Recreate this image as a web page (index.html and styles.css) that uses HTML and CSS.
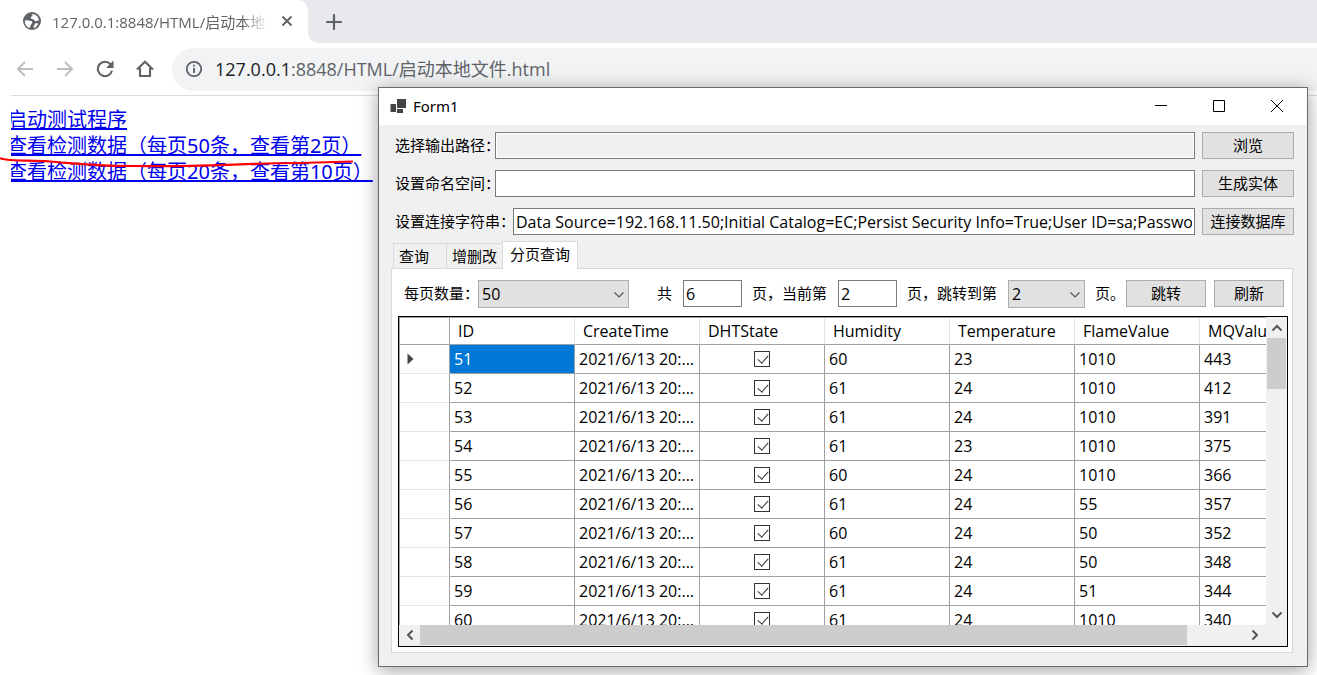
FILE: index.html
```html
<!DOCTYPE html>
<html lang="zh-CN">
<head>
<meta charset="utf-8">
<title>127.0.0.1:8848/HTML/启动本地文件.html</title>
<link rel="stylesheet" href="styles.css">
</head>
<body>
<div class="browser">
  <header class="tabstrip">
    <div class="tab">
      <svg class="globe" width="18" height="18" viewBox="0 0 18 18" aria-hidden="true"><circle cx="9" cy="9" r="9" fill="#5f6368"/><path d="M2 8.500C4 8 6 9 8 9C9.500 9 9.500 10.500 9 11.500L7.500 13C7.500 14.500 7 15.500 6.500 16C3.500 15 1.500 12 2 8.500Z" fill="#fff"/><path d="M8.500 2C11 1.800 13 3 14.500 4.500L16 8C15 9 13 9.500 12 9C11 8.500 11.500 7.500 10 7.300C8.500 7 7.500 6.500 7.800 5.300C8 4.500 9 4.500 9.500 4C10 3.300 9 2.800 8.500 2Z" fill="#fff"/><path d="M12 11.500L14.500 11L15 12.500L12.500 15.500L10.500 15.800C10 14.500 12 13 12 11.500Z" fill="#fff"/></svg>
      <span class="tab-title">127.0.0.1:8848/HTML/启动本地文件</span>
      <button class="icon-btn tab-close" aria-label="关闭标签页"><svg width="12" height="12" viewBox="0 0 12 12"><path d="M1.500 1.500L10.500 10.500M10.500 1.500L1.500 10.500" stroke="#5f6368" stroke-width="1.900"/></svg></button>
    </div>
    <div class="strip-rest">
      <button class="icon-btn" aria-label="新标签页"><svg width="16" height="16" viewBox="0 0 16 16"><path d="M8 1V15M1 8H15" stroke="#5f6368" stroke-width="2.200" stroke-linecap="round"/></svg></button>
    </div>
  </header>
  <nav class="toolbar">
    <button class="icon-btn" aria-label="后退"><svg width="18" height="18" viewBox="0 0 18 18"><path d="M17 9H2M9 2L2 9L9 16" fill="none" stroke="#bcbec0" stroke-width="2"/></svg></button>
    <button class="icon-btn" aria-label="前进"><svg width="18" height="18" viewBox="0 0 18 18"><path d="M1 9H16M9 2L16 9L9 16" fill="none" stroke="#bcbec0" stroke-width="2"/></svg></button>
    <button class="icon-btn" aria-label="重新加载"><svg width="18" height="18" viewBox="0 0 18 18"><path d="M14.500 4.200A7.200 7.200 0 1 0 16 10.800" fill="none" stroke="#5f6368" stroke-width="2.100"/><path d="M17.500 0.500V8H10Z" fill="#5f6368"/></svg></button>
    <button class="icon-btn" aria-label="主页"><svg width="18" height="18" viewBox="0 0 18 18"><path d="M1 9.500L9 1.800L17 9.500M4 8V16H14V8" fill="none" stroke="#5f6368" stroke-width="2.100"/></svg></button>
    <div class="omnibox">
      <svg width="18" height="18" viewBox="0 0 18 18" aria-hidden="true"><circle cx="9" cy="9" r="7.200" fill="none" stroke="#5f6368" stroke-width="1.800"/><path d="M9 8V13M9 4.800V6.600" stroke="#5f6368" stroke-width="1.900"/></svg>
      <span class="url"><span class="host">127.0.0.1</span>:8848/HTML/启动本地文件.html</span>
    </div>
  </nav>
  <main class="page">
    <ul class="links">
      <li><a href="#start">启动测试程序</a></li>
      <li><a href="#page2">查看检测数据（每页50条，查看第2页）</a></li>
      <li><a href="#page10">查看检测数据（每页20条，查看第10页）</a></li>
    </ul>
  </main>
  <svg class="marker" width="360" height="16" viewBox="0 0 360 16" aria-hidden="true"><path d="M1 3.500C10 6.500 30 5 50 6.500C75 8.500 90 11 130 11C200 12 240 8.500 300 8L352 6.500" fill="none" stroke="#ff0000" stroke-width="2.200" stroke-linecap="round"/></svg>
</div>

<section class="window" aria-label="Form1">
  <header class="titlebar">
    <svg width="17" height="16" viewBox="0 0 17 16" aria-hidden="true"><path d="M7 1H16V10H7ZM0.500 6H6V14H0.500ZM7 11H13V15H7Z" fill="#444"/></svg>
    <span class="title">Form1</span>
    <button class="win-btn" aria-label="最小化"><svg width="12" height="12" viewBox="0 0 12 12"><path d="M0 5.500H12" stroke="#000"/></svg></button>
    <button class="win-btn" aria-label="最大化"><svg width="12" height="12" viewBox="0 0 12 12"><path d="M0.500 0.500H11.500V11.500H0.500Z" fill="none" stroke="#000"/></svg></button>
    <button class="win-btn" aria-label="关闭"><svg width="12" height="12" viewBox="0 0 12 12"><path d="M0 0L12 12M12 0L0 12" stroke="#000"/></svg></button>
  </header>
  <div class="form">
    <div class="row"><label class="short" for="out">选择输出路径：</label><input class="box readonly" id="out" readonly><button class="btn">浏览</button></div>
    <div class="row"><label class="short" for="ns">设置命名空间：</label><input class="box" id="ns"><button class="btn">生成实体</button></div>
    <div class="row"><label class="long" for="conn">设置连接字符串：</label><input class="box" id="conn" value="Data Source=192.168.11.50;Initial Catalog=EC;Persist Security Info=True;User ID=sa;Password"><button class="btn">连接数据库</button></div>
  </div>
  <div class="tabs" role="tablist">
    <button class="form-tab" role="tab">查询</button>
    <button class="form-tab" role="tab">增删改</button>
    <button class="form-tab active" role="tab" aria-selected="true">分页查询</button>
  </div>
  <div class="panel">
    <div class="pager">
      <label class="size-label" for="size">每页数量：</label>
      <span class="combo size"><select id="size"><option>50</option></select><svg width="12" height="8" viewBox="0 0 12 8"><path d="M1.500 1.500L6 6L10.500 1.500" fill="none" stroke="#555" stroke-width="1.200"/></svg></span>
      <label class="total" for="total">共</label><input class="num" id="total" value="6">
      <label for="current">页，当前第</label><input class="num" id="current" value="2">
      <label for="jump">页，跳转到第</label>
      <span class="combo jump"><select id="jump"><option>2</option></select><svg width="12" height="8" viewBox="0 0 12 8"><path d="M1.500 1.500L6 6L10.500 1.500" fill="none" stroke="#555" stroke-width="1.200"/></svg></span>
      <span class="end">页。</span>
      <button class="btn go">跳转</button>
      <button class="btn refresh">刷新</button>
    </div>
    <div class="grid">
      <div class="viewport">
        <table>
          <colgroup><col class="c-head"><col><col><col><col><col><col></colgroup>
          <thead><tr><th></th><th>ID</th><th>CreateTime</th><th>DHTState</th><th>Humidity</th><th>Temperature</th><th>FlameValue</th><th>MQValue</th></tr></thead>
          <tbody>
            <tr><th><svg width="7" height="12" viewBox="0 0 7 12" aria-label="当前行"><path d="M0.500 0.500L6.500 6L0.500 11.500Z" fill="#444"/></svg></th><td class="selected">51</td><td>2021/6/13 20:...</td><td class="check"><input type="checkbox" checked aria-label="51"></td><td>60</td><td>23</td><td>1010</td><td>443</td></tr>
            <tr><th></th><td>52</td><td>2021/6/13 20:...</td><td class="check"><input type="checkbox" checked aria-label="52"></td><td>61</td><td>24</td><td>1010</td><td>412</td></tr>
            <tr><th></th><td>53</td><td>2021/6/13 20:...</td><td class="check"><input type="checkbox" checked aria-label="53"></td><td>61</td><td>24</td><td>1010</td><td>391</td></tr>
            <tr><th></th><td>54</td><td>2021/6/13 20:...</td><td class="check"><input type="checkbox" checked aria-label="54"></td><td>61</td><td>23</td><td>1010</td><td>375</td></tr>
            <tr><th></th><td>55</td><td>2021/6/13 20:...</td><td class="check"><input type="checkbox" checked aria-label="55"></td><td>60</td><td>24</td><td>1010</td><td>366</td></tr>
            <tr><th></th><td>56</td><td>2021/6/13 20:...</td><td class="check"><input type="checkbox" checked aria-label="56"></td><td>61</td><td>24</td><td>55</td><td>357</td></tr>
            <tr><th></th><td>57</td><td>2021/6/13 20:...</td><td class="check"><input type="checkbox" checked aria-label="57"></td><td>60</td><td>24</td><td>50</td><td>352</td></tr>
            <tr><th></th><td>58</td><td>2021/6/13 20:...</td><td class="check"><input type="checkbox" checked aria-label="58"></td><td>61</td><td>24</td><td>50</td><td>348</td></tr>
            <tr><th></th><td>59</td><td>2021/6/13 20:...</td><td class="check"><input type="checkbox" checked aria-label="59"></td><td>61</td><td>24</td><td>51</td><td>344</td></tr>
            <tr><th></th><td>60</td><td>2021/6/13 20:...</td><td class="check"><input type="checkbox" checked aria-label="60"></td><td>61</td><td>24</td><td>1010</td><td>340</td></tr>
          </tbody>
        </table>
      </div>
      <div class="vbar">
        <button class="arrow" aria-label="向上滚动"><svg width="12" height="8" viewBox="0 0 12 8"><path d="M1.500 6.500L6 2L10.500 6.500" fill="none" stroke="#555" stroke-width="2"/></svg></button>
        <div class="vthumb"></div>
        <button class="arrow down" aria-label="向下滚动"><svg width="12" height="8" viewBox="0 0 12 8"><path d="M1.500 1.500L6 6L10.500 1.500" fill="none" stroke="#555" stroke-width="2"/></svg></button>
      </div>
      <div class="hbar">
        <button class="arrow" aria-label="向左滚动"><svg width="8" height="12" viewBox="0 0 8 12"><path d="M6.500 1.500L2 6L6.500 10.500" fill="none" stroke="#555" stroke-width="2"/></svg></button>
        <div class="track"><div class="hthumb"></div></div>
        <button class="arrow" aria-label="向右滚动"><svg width="8" height="12" viewBox="0 0 8 12"><path d="M1.500 1.500L6 6L1.500 10.500" fill="none" stroke="#555" stroke-width="2"/></svg></button>
      </div>
    </div>
  </div>
</section>
</body>
</html>
```
FILE: styles.css
```css
* { box-sizing: border-box; }

body {
  margin: 0;
  background: #fff;
  color: #000;
  font: 15px/20px "Noto Sans", "Noto Sans CJK SC", sans-serif;
}

button, input, select { font: inherit; color: inherit; margin: 0; padding: 0; border-radius: 0; }
svg { display: block; flex: none; }

.browser { position: relative; height: 100vh; overflow: hidden; }

.icon-btn, .win-btn, .arrow {
  display: flex;
  align-items: center;
  justify-content: center;
  border: 0;
  background: none;
}

/* Tab strip */
.tabstrip { display: flex; height: 43px; background: linear-gradient(90deg, #fff 50%, #e8e9ed 50%); }
.tab {
  display: flex;
  align-items: center;
  width: 308px;
  padding: 0 14px 1px 23px;
  background: #fff;
  border-radius: 0 10px 0 0;
  box-shadow: 10px -10px 0 #e8e9ed;
}
.tab-title {
  flex: 1;
  margin: 2px 12px 0 11px;
  overflow: hidden;
  white-space: nowrap;
  color: #5f6368;
  font: 15px/22px "Open Sans", "Noto Sans CJK SC", sans-serif;
  mask-image: linear-gradient(90deg, #000 88%, transparent);
}
.tab-close { width: 14px; height: 14px; }
.strip-rest {
  display: flex;
  flex: 1;
  align-items: center;
  padding-left: 18px;
  background: #e8e9ed;
  border-radius: 0 0 0 10px;
}

/* Toolbar */
.toolbar {
  display: flex;
  align-items: center;
  gap: 22px;
  height: 53px;
  margin-left: 11px;
  padding-left: 5px;
  border-bottom: 1px solid #dadce0;
}
.omnibox {
  display: flex;
  flex: 1;
  align-items: center;
  gap: 12px;
  height: 43px;
  margin-left: -4px;
  padding-left: 13px;
  border-radius: 22px 0 0 22px;
  background: #f1f3f4;
}
.url { color: #5f6368; font: 18px/26px "Open Sans", "Noto Sans CJK SC", sans-serif; }
.host { color: #202124; }

/* Page content */
.page { margin-left: 11px; padding-top: 11px; overflow: hidden; }
.links { margin: 0 0 0 -4px; padding: 0; list-style: none; font-size: 20px; line-height: 26px; }
.links a { color: #0000ee; text-decoration-thickness: 2px; }
.marker { position: absolute; left: 0; top: 155px; }

/* Form window */
.window {
  position: absolute;
  left: 378px;
  right: 9px;
  top: 87px;
  bottom: 8px;
  display: flex;
  flex-direction: column;
  border: 1px solid #6b6b6b;
  background: #f0f0f0;
  box-shadow: 0 3px 18px rgba(0, 0, 0, 0.38);
}
.titlebar { display: flex; align-items: center; height: 37px; padding: 0 6px 2px 11px; background: #fff; }
.title { flex: 1; margin-left: 6px; }
.win-btn { width: 48px; height: 34px; margin-left: 10px; }

.form { display: grid; gap: 11px; padding: 7px 13px 0 16px; }
.row { display: flex; align-items: center; height: 27px; white-space: nowrap; }
.row label { padding-bottom: 2px; }
.short { width: 100px; }
.long { width: 118px; }
.box {
  flex: 1;
  min-width: 0;
  height: 27px;
  padding: 0 2px;
  border: 1px solid #7a7a7a;
  background: #fff;
}
.box, .num, .combo select { font: 16px/20px "Open Sans", "Noto Sans CJK SC", sans-serif; }
.readonly { background: #f0f0f0; box-shadow: inset 0 0 0 1px #fff; }
.btn { width: 92px; height: 27px; padding-bottom: 2px; border: 1px solid #adadad; background: #e1e1e1; }
.row .btn { margin-left: 7px; }

.tabs { display: flex; align-items: flex-end; height: 27px; margin: 6px 0 0 14px; }
.form-tab {
  height: 25px;
  padding: 0 5px;
  border: 1px solid #d9d9d9;
  border-right: 0;
  border-bottom: 0;
  background: #f0f0f0;
}
.form-tab:first-child { padding-right: 17px; }
.form-tab.active {
  position: relative;
  height: 28px;
  margin-bottom: -1px;
  padding: 0 7px 3px;
  border-right: 1px solid #d9d9d9;
  background: #fff;
}

.panel {
  display: flex;
  flex: 1;
  flex-direction: column;
  min-height: 0;
  margin: 0 14px 13px 12px;
  padding: 11px 4px 5px 6px;
  border: 1px solid #d9d9d9;
  background: #fff;
}
.pager { display: flex; align-items: flex-start; height: 28px; padding: 0 4px 0 6px; line-height: 27px; white-space: nowrap; }
.size-label { width: 74px; }
.combo { position: relative; display: block; height: 28px; }
.combo select {
  width: 100%;
  height: 100%;
  padding-left: 3px;
  border: 1px solid #adadad;
  background: #e1e1e1;
  appearance: none;
}
.combo svg { position: absolute; right: 4px; top: 11px; pointer-events: none; }
.size { width: 151px; }
.jump { width: 77px; }
.total { margin-left: 28px; }
.num { width: 59px; height: 27px; margin: 0 10px 0 11px; padding: 0 2px; border: 1px solid #7a7a7a; }
.pager .jump { margin: 0 10px 0 11px; }
.pager .btn { line-height: 20px; }
.go { width: 80px; margin-left: auto; }
.refresh { width: 70px; margin-left: 8px; }

/* Data grid */
.grid {
  display: grid;
  flex: 1;
  grid-template: minmax(0, 1fr) 21px / minmax(0, 1fr) 21px;
  min-height: 0;
  margin-top: 8px;
  border: 1px solid #000;
  background: #f0f0f0;
}
.viewport { overflow: hidden; border-top: 1px solid #a0a0a0; border-left: 1px solid #a0a0a0; background: #fff; }
table { width: 925px; table-layout: fixed; border-collapse: separate; border-spacing: 0; font-family: "Open Sans", sans-serif; font-size: 16px; }
.c-head { width: 50px; }
th, td {
  height: 29px;
  padding: 0 0 0 4px;
  border-right: 1px solid #a0a0a0;
  border-bottom: 1px solid #a0a0a0;
  font-weight: 400;
  text-align: left;
  white-space: nowrap;
}
thead th { height: 27px; padding-left: 8px; border-right-color: #e5e5e5; }
thead th:first-child { border-right-color: #a0a0a0; }
tbody th { padding-left: 7px; border-bottom-color: #e5e5e5; border-right-color: #a0a0a0; }
.selected { background: #0078d7; color: #fff; }
.check { padding: 0; text-align: center; }
.check input {
  display: block;
  position: relative;
  width: 16px;
  height: 16px;
  margin: 0 auto;
  border: 1px solid #333;
  background: #fff;
  appearance: none;
}
.check input::after {
  content: "";
  position: absolute;
  left: 5px;
  top: 1px;
  width: 5px;
  height: 9px;
  border: solid #333;
  border-width: 0 1px 1px 0;
  transform: rotate(42deg);
}
.vbar { display: flex; flex-direction: column; align-items: center; }
.arrow { width: 20px; height: 21px; }
.vthumb { width: 19px; height: 51px; background: #cdcdcd; }
.down { margin-top: auto; }
.hbar { display: flex; padding: 0 1px 0 1px; }
.track { flex: 1; }
.hthumb { width: 93%; height: 20px; background: #cdcdcd; }
.hbar .arrow { height: 20px; }
```
